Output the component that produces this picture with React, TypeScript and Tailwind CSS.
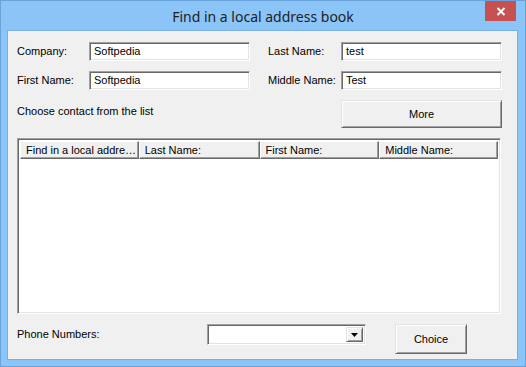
import React from 'react';

// Win8-style dialog: "Find in a local address book"

const font = { fontFamily: '"Liberation Sans", Arial, sans-serif' };

const sunken =
    'bg-white border border-t-[#a0a0a0] border-l-[#a0a0a0] border-r-white border-b-white shadow-[inset_1px_1px_0_#696969,inset_-1px_-1px_0_#e3e3e3]';
const raised =
    'bg-[#f0f0f0] border border-t-[#e3e3e3] border-l-[#e3e3e3] border-r-[#696969] border-b-[#696969] shadow-[inset_1px_1px_0_#ffffff,inset_-1px_-1px_0_#a0a0a0]';

const TextBox = ({ value }: { value: string }) => (
    <div className={`${sunken} w-[161px] h-[19px] flex items-center px-[4px] text-[11px] text-black`}>
        {value}
    </div>
);

const Label = ({ text, w }: { text: string; w: string }) => (
    <div className={`${w} text-[11px] text-[#000] whitespace-nowrap`}>{text}</div>
);

const columns = [
    { title: 'Find in a local addre…', w: 'w-[119px]' },
    { title: 'Last Name:', w: 'w-[121px]' },
    { title: 'First Name:', w: 'w-[120px]' },
    { title: 'Middle Name:', w: 'w-[119px]' },
];

export default function App() {
    return (
        <div
            className="w-[526px] h-[367px] bg-[#8bc4f7] border border-[#6aa3da] flex flex-col overflow-hidden"
            style={font}
        >
            {/* title bar */}
            <div className="relative h-[29px] flex items-center justify-center">
                <span
                    className="text-[14px] text-[#1e1e1e] pt-[2px]"
                    style={{ fontFamily: '"Noto Sans", "Open Sans", sans-serif' }}
                >
                    Find in a local address book
                </span>
                <div className="absolute left-[484px] top-0 w-[31px] h-[20px] bg-[#c75050] flex items-center justify-center">
                    <svg width="10" height="9" viewBox="0 0 10 9">
                        <path d="M1.5 1 L8.5 8 M8.5 1 L1.5 8" stroke="#fff" strokeWidth="2" />
                    </svg>
                </div>
            </div>

            {/* client area */}
            <div className="ml-[6px] w-[511px] h-[330px] bg-[#f0f0f0] border border-[#78b0e6] pl-[9px] pt-[11px] flex flex-col">
                <div className="flex items-center h-[19px]">
                    <Label text="Company:" w="w-[72px]" />
                    <TextBox value="Softpedia" />
                    <div className="w-[18px]" />
                    <Label text="Last Name:" w="w-[73px]" />
                    <TextBox value="test" />
                </div>
                <div className="flex items-center h-[19px] mt-[10px]">
                    <Label text="First Name:" w="w-[72px]" />
                    <TextBox value="Softpedia" />
                    <div className="w-[18px]" />
                    <Label text="Middle Name:" w="w-[73px]" />
                    <TextBox value="Test" />
                </div>
                <div className="flex h-[28px] mt-[10px]">
                    <div className="w-[324px] text-[11px] text-black pt-[3px]">Choose contact from the list</div>
                    <div className={`${raised} w-[161px] h-[28px] flex items-center justify-center text-[11px] text-black`}>
                        More
                    </div>
                </div>

                {/* list view */}
                <div className={`${sunken} mt-[10px] w-[484px] h-[176px] p-[2px]`}>
                    <div className="flex h-[18px]">
                        {columns.map((c) => (
                            <div
                                key={c.title}
                                className={`${c.w} h-[18px] bg-[#f0f0f0] border border-t-white border-l-white border-r-[#696969] border-b-[#696969] shadow-[inset_-1px_-1px_0_#a0a0a0] px-[5px] flex items-center text-[11px] text-black whitespace-nowrap overflow-hidden`}
                            >
                                {c.title}
                            </div>
                        ))}
                    </div>
                </div>

                {/* bottom row */}
                <div className="flex items-start mt-[10px]">
                    <div className="w-[190px] h-[21px] flex items-center text-[11px] text-black">Phone Numbers:</div>
                    <div className={`${sunken} w-[159px] h-[21px] flex justify-end p-[2px]`}>
                        <div className={`${raised} w-[17px] h-full flex items-center justify-center`}>
                            <svg width="7" height="4" viewBox="0 0 7 4">
                                <path d="M0 0 H7 L3.5 4 Z" fill="#000" />
                            </svg>
                        </div>
                    </div>
                    <div className="w-[29px]" />
                    <div className={`${raised} w-[72px] h-[30px] flex items-center justify-center text-[11px] text-black`}>
                        Choice
                    </div>
                </div>
            </div>
        </div>
    );
}
